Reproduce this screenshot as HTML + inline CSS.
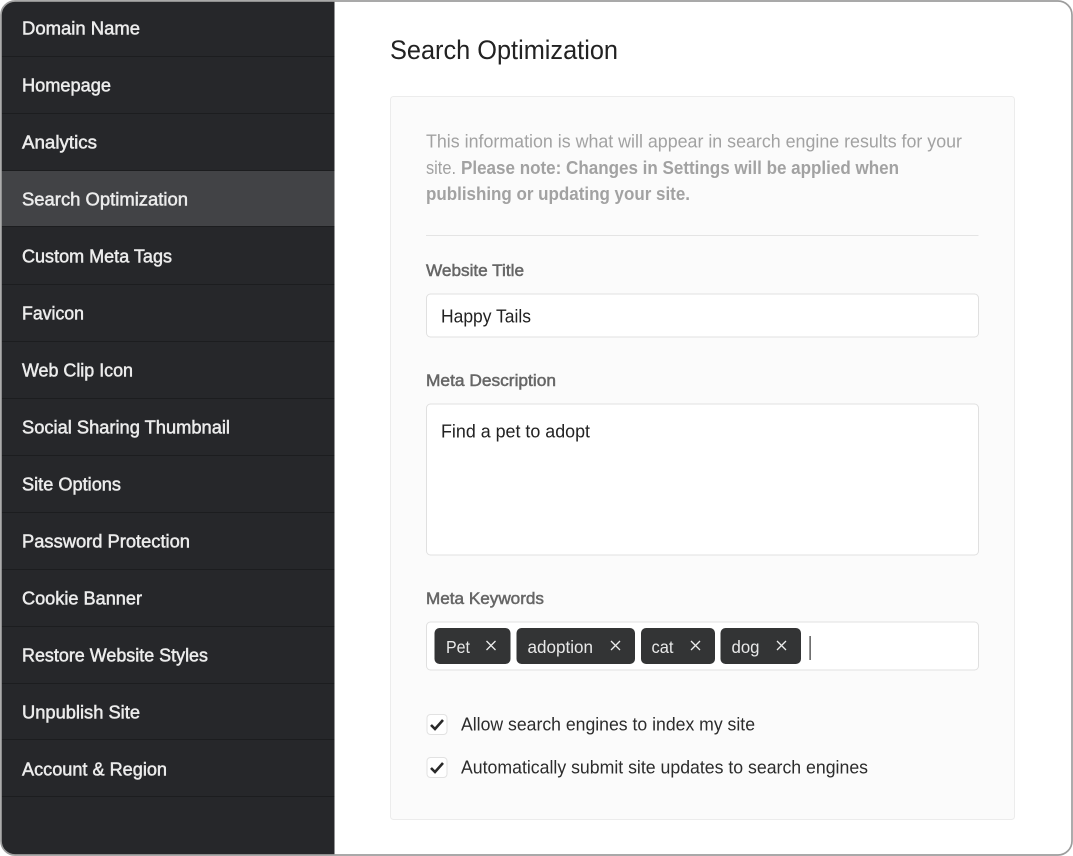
<!DOCTYPE html>
<html lang="en">
<head>
<meta charset="utf-8">
<title>Search Optimization</title>
<style>
html,body{margin:0;padding:0;width:1073px;height:856px;overflow:hidden;background:#fff}
svg{display:block}
text{font-family:"Liberation Sans",sans-serif}
.nav{font-size:18.500px;fill:#ececec;stroke:#ececec;stroke-width:.5px}
.label{font-size:16.500px;fill:#666;stroke:#666;stroke-width:.5px}
.intro{font-size:18.500px;fill:#a2a2a2}
.introb{font-size:18.500px;fill:#a2a2a2;font-weight:bold}
.val{font-size:18.500px;fill:#222}
.tag{font-size:17.500px;fill:#e8e8e8}
.chk{font-size:18.500px;fill:#2c2c2c}
</style>
</head>
<body>
<svg width="1073" height="856" viewBox="0 0 1073 856" xmlns="http://www.w3.org/2000/svg">
<defs><clipPath id="f"><rect x="1" y="1" width="1071" height="854" rx="14"/></clipPath></defs>
<rect width="1073" height="856" fill="#fff"/>
<g clip-path="url(#f)">
<rect x="0" y="0" width="334.500" height="856" fill="#26272a"/>
<rect x="0" y="171" width="334.500" height="55" fill="#424346"/>
<g fill="#1c1d1f">
<rect x="0" y="56" width="334.500" height="1"/><rect x="0" y="113" width="334.500" height="1"/><rect x="0" y="170" width="334.500" height="1"/><rect x="0" y="226" width="334.500" height="1"/><rect x="0" y="284" width="334.500" height="1"/><rect x="0" y="341" width="334.500" height="1"/><rect x="0" y="398" width="334.500" height="1"/><rect x="0" y="455" width="334.500" height="1"/><rect x="0" y="512" width="334.500" height="1"/><rect x="0" y="569" width="334.500" height="1"/><rect x="0" y="626" width="334.500" height="1"/><rect x="0" y="683" width="334.500" height="1"/><rect x="0" y="739" width="334.500" height="1"/><rect x="0" y="796" width="334.500" height="1"/>
</g>
</g>
<rect x="1" y="1" width="1071" height="854" rx="14" fill="none" stroke="#9d9d9d" stroke-width="1.700"/>

<text class="nav" x="22" y="34.500" textLength="118" lengthAdjust="spacingAndGlyphs">Domain Name</text>
<text class="nav" x="22" y="91.500" textLength="89" lengthAdjust="spacingAndGlyphs">Homepage</text>
<text class="nav" x="22" y="148.500" textLength="75" lengthAdjust="spacingAndGlyphs">Analytics</text>
<text class="nav" x="22" y="205.500" textLength="166" lengthAdjust="spacingAndGlyphs">Search Optimization</text>
<text class="nav" x="22" y="262.500" textLength="150" lengthAdjust="spacingAndGlyphs">Custom Meta Tags</text>
<text class="nav" x="22" y="319.500" textLength="62" lengthAdjust="spacingAndGlyphs">Favicon</text>
<text class="nav" x="22" y="376.500" textLength="111" lengthAdjust="spacingAndGlyphs">Web Clip Icon</text>
<text class="nav" x="22" y="433.500" textLength="208" lengthAdjust="spacingAndGlyphs">Social Sharing Thumbnail</text>
<text class="nav" x="22" y="490.500" textLength="99" lengthAdjust="spacingAndGlyphs">Site Options</text>
<text class="nav" x="22" y="547.500" textLength="168" lengthAdjust="spacingAndGlyphs">Password Protection</text>
<text class="nav" x="22" y="604.500" textLength="120" lengthAdjust="spacingAndGlyphs">Cookie Banner</text>
<text class="nav" x="22" y="661.500" textLength="186" lengthAdjust="spacingAndGlyphs">Restore Website Styles</text>
<text class="nav" x="22" y="718.500" textLength="118" lengthAdjust="spacingAndGlyphs">Unpublish Site</text>
<text class="nav" x="22" y="775.500" textLength="145" lengthAdjust="spacingAndGlyphs">Account &amp; Region</text>

<text x="390" y="59" font-size="27" fill="#222" textLength="228" lengthAdjust="spacingAndGlyphs">Search Optimization</text>

<rect x="390.500" y="96.500" width="624" height="723" rx="3" fill="#fbfbfb" stroke="#ececec"/>

<text class="intro" x="426" y="147.500" textLength="536" lengthAdjust="spacingAndGlyphs">This information is what will appear in search engine results for your</text>
<text class="intro" x="426" y="174" textLength="30" lengthAdjust="spacingAndGlyphs">site.</text>
<text class="introb" x="461" y="174" textLength="438" lengthAdjust="spacingAndGlyphs">Please note: Changes in Settings will be applied when</text>
<text class="introb" x="426" y="200" textLength="264" lengthAdjust="spacingAndGlyphs">publishing or updating your site.</text>
<rect x="426" y="235" width="552.500" height="1" fill="#e4e4e4"/>

<text class="label" x="426" y="276" textLength="98" lengthAdjust="spacingAndGlyphs">Website Title</text>
<rect x="426.500" y="294" width="552" height="43" rx="4" fill="#fff" stroke="#e0e0e0"/>
<text class="val" x="441" y="322.500" textLength="90" lengthAdjust="spacingAndGlyphs">Happy Tails</text>

<text class="label" x="426" y="386" textLength="130" lengthAdjust="spacingAndGlyphs">Meta Description</text>
<rect x="426.500" y="404" width="552" height="151" rx="4" fill="#fff" stroke="#e0e0e0"/>
<text class="val" x="441" y="437.500" textLength="149" lengthAdjust="spacingAndGlyphs">Find a pet to adopt</text>

<text class="label" x="426" y="604" textLength="118" lengthAdjust="spacingAndGlyphs">Meta Keywords</text>
<rect x="426.500" y="622" width="552" height="48" rx="4" fill="#fff" stroke="#e0e0e0"/>

<g fill="#333435">
<rect x="434.500" y="628" width="76" height="36" rx="5"/>
<rect x="516.500" y="628" width="118.500" height="36" rx="5"/>
<rect x="641" y="628" width="74" height="36" rx="5"/>
<rect x="720.500" y="628" width="80.500" height="36" rx="5"/>
</g>
<text class="tag" x="446" y="653" textLength="24" lengthAdjust="spacingAndGlyphs">Pet</text>
<text class="tag" x="527.500" y="653" textLength="65.500" lengthAdjust="spacingAndGlyphs">adoption</text>
<text class="tag" x="651.500" y="653" textLength="22" lengthAdjust="spacingAndGlyphs">cat</text>
<text class="tag" x="731.500" y="653" textLength="28" lengthAdjust="spacingAndGlyphs">dog</text>
<g stroke="#ececec" stroke-width="1.300" fill="none">
<path d="M486.500 641l9 9M495.500 641l-9 9"/>
<path d="M611 641l9 9M620 641l-9 9"/>
<path d="M691 641l9 9M700 641l-9 9"/>
<path d="M777 641l9 9M786 641l-9 9"/>
</g>
<rect x="809.500" y="636" width="1.200" height="24" fill="#333"/>

<rect x="427" y="714.500" width="20" height="20" rx="3.500" fill="#fff" stroke="#e2e2e2"/>
<path d="M431 725l4 4 8-9" fill="none" stroke="#2a2a2a" stroke-width="2.600"/>
<text class="chk" x="461" y="730.500" textLength="294" lengthAdjust="spacingAndGlyphs">Allow search engines to index my site</text>
<rect x="427" y="757.500" width="20" height="20" rx="3.500" fill="#fff" stroke="#e2e2e2"/>
<path d="M431 768l4 4 8-9" fill="none" stroke="#2a2a2a" stroke-width="2.600"/>
<text class="chk" x="461" y="773.500" textLength="407" lengthAdjust="spacingAndGlyphs">Automatically submit site updates to search engines</text>
</svg>
</body>
</html>
